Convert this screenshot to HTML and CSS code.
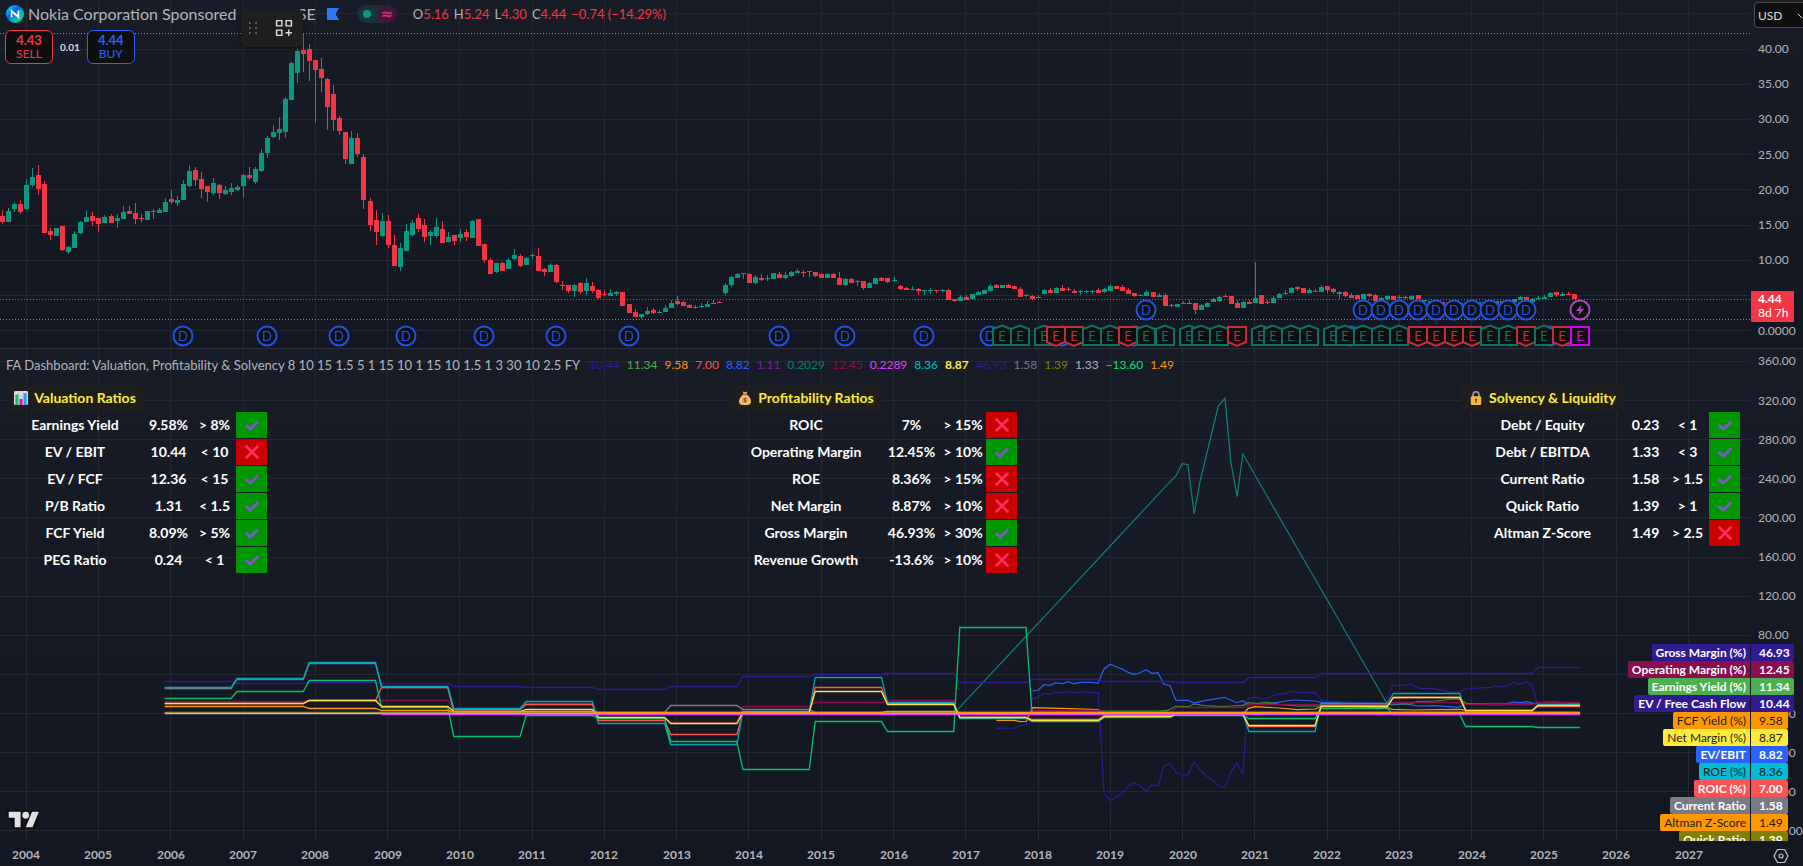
FILE: index.html
```html
<!DOCTYPE html>
<html lang="en">
<head>
<meta charset="utf-8">
<title>Nokia Corporation Sponsored – chart</title>
<link rel="stylesheet" href="styles.css">
</head>
<body>
<svg class="symbols" aria-hidden="true">
  <symbol id="pass" viewBox="0 0 14 14"><path d="M1.6 7.8 5.2 11.2 12.4 4" fill="none" stroke="#7e57c2" stroke-width="3" stroke-linecap="round" stroke-linejoin="round"/></symbol>
  <symbol id="fail" viewBox="0 0 14 14"><path d="M1.5 1.5 12.5 12.5M12.5 1.5 1.5 12.5" fill="none" stroke="#ff2e5f" stroke-width="2.5" stroke-linecap="round"/></symbol>
</svg>

<main class="chart">
  <section class="pane pane-price">
    <svg class="plot" id="price-plot" role="img" aria-label="Monthly candles"></svg>
    <div class="overlay">
      <header class="symbol-row">
        <svg class="logo" viewBox="0 0 18 18" aria-hidden="true">
          <defs><linearGradient id="nk" x1="0.1" y1="0.1" x2="0.9" y2="0.9"><stop offset="0" stop-color="#00e0e8"/><stop offset="0.4" stop-color="#0a5cf0"/><stop offset="0.6" stop-color="#00a8c8"/><stop offset="1" stop-color="#0be070"/></linearGradient></defs>
          <circle cx="9" cy="9" r="9" fill="url(#nk)"/>
          <path d="M5.6 12.6V6L12.4 12V5.4" fill="none" stroke="#fff" stroke-width="1.7"/>
        </svg>
        <h1 class="title">Nokia Corporation Sponsored · M · NYSE</h1>
        <svg class="flag" viewBox="0 0 12 12" aria-hidden="true"><path d="M1 0H12L8.500 6 12 12H0V1A1 1 0 0 1 1 0Z" fill="#2979ff"/></svg>
        <span class="pill"><i class="pill-open"></i><i class="pill-data">≈</i></span>
        <p class="ohlc"><span>O<b>5.16</b></span><span>H<b>5.24</b></span><span>L<b>4.30</b></span><span>C<b>4.44</b></span><b>−0.74 (−14.29%)</b></p>
      </header>
      <div class="trade-row">
        <button class="trade sell" type="button"><strong>4.43</strong>SELL</button>
        <span class="spread">0.01</span>
        <button class="trade buy" type="button"><strong>4.44</strong>BUY</button>
      </div>
      <div class="floating-bar">
        <svg class="grip" viewBox="0 0 8 12" aria-hidden="true"><path d="M0 0h2v2H0zM6 0h2v2H6zM0 5h2v2H0zM6 5h2v2H6zM0 10h2v2H0zM6 10h2v2H6z" fill="#5a5a5a"/></svg>
        <button class="add-layout" type="button" aria-label="Add to favorites"><svg viewBox="0 0 17 17" aria-hidden="true"><path d="M1.500 1.500h5v5h-5zM10.500 1.500h5v5h-5zM1.500 10.500h5v5h-5zM13 10v6M10 13h6" fill="none" stroke="#e0e0e0" stroke-width="1.300"/></svg></button>
      </div>
    </div>
  </section>
  <aside class="axis axis-price">
    <svg class="plot" id="price-axis"></svg>
    <select class="currency" aria-label="Currency"><option>USD</option></select>
    <p class="last-price"><span>4.44</span><span>8d 7h</span></p>
  </aside>

  <section class="pane pane-ratios">
    <svg class="plot" id="ratio-plot" role="img" aria-label="Fundamental ratios"></svg>
    <div class="overlay">
      <p class="legend"><span class="legend-name">FA Dashboard: Valuation, Profitability &amp; Solvency 8 10 15 1.5 5 1 15 10 1 15 10 1.5 1 3 30 10 2.5 FY</span>
        <span class="c-indigo">10.44</span><span class="c-green">11.34</span><span class="c-orange">9.58</span><span class="c-red">7.00</span><span class="c-blue">8.82</span><span class="c-purple">1.11</span><span class="c-teal">0.2029</span><span class="c-maroon">12.45</span><span class="c-pink">0.2289</span><span class="c-cyan">8.36</span><span class="c-yellow">8.87</span><span class="c-indigo">46.93</span><span class="c-gray">1.58</span><span class="c-olive">1.39</span><span class="c-silver">1.33</span><span class="c-lime">−13.60</span><span class="c-orange">1.49</span></p>
      <div class="tables">
        <table class="ratios valuation">
          <tr><th class="head"><svg class="emoji" viewBox="0 0 16 16" aria-hidden="true"><rect width="16" height="16" rx="1.500" fill="#e3dcea"/><path d="M5.500 0v16M10.500 0v16M0 5.500h16M0 10.500h16" stroke="#c3b5d2" stroke-width="0.800"/><path d="M1.500 4h3.500v12H1.500z" fill="#14c060"/><path d="M6.300 9h3.500v7H6.300z" fill="#f0147c"/><path d="M11 2.500h3.500V16H11z" fill="#1aa3f0"/></svg>Valuation Ratios</th><td colspan="3"></td></tr>
          <tr><th>Earnings Yield</th><td>9.58%</td><td>&gt; 8%</td><td class="ok"><svg><use href="#pass"/></svg></td></tr>
          <tr><th>EV / EBIT</th><td>10.44</td><td>&lt; 10</td><td class="bad"><svg><use href="#fail"/></svg></td></tr>
          <tr><th>EV / FCF</th><td>12.36</td><td>&lt; 15</td><td class="ok"><svg><use href="#pass"/></svg></td></tr>
          <tr><th>P/B Ratio</th><td>1.31</td><td>&lt; 1.5</td><td class="ok"><svg><use href="#pass"/></svg></td></tr>
          <tr><th>FCF Yield</th><td>8.09%</td><td>&gt; 5%</td><td class="ok"><svg><use href="#pass"/></svg></td></tr>
          <tr><th>PEG Ratio</th><td>0.24</td><td>&lt; 1</td><td class="ok"><svg><use href="#pass"/></svg></td></tr>
        </table>
        <table class="ratios profitability">
          <tr><th class="head"><svg class="emoji" viewBox="0 0 16 16" aria-hidden="true"><path d="M5.500 0.500 8 1.500 10.500 0.500 9.800 4H6.200Z" fill="#e8b06a"/><path d="M6 4h4c3 2 4.800 5 4.800 8 0 2.600-1.500 4-4 4H5.200c-2.500 0-4-1.400-4-4C1.200 9 3 6 6 4Z" fill="#f6bd73"/><path d="M5.300 4h5.400" stroke="#a05a3a" stroke-width="1.300"/><circle cx="8" cy="10.500" r="3.300" fill="#dd9a56"/><path d="M9.500 9C8.500 8.300 6.700 8.600 6.800 9.700 7 10.800 9.300 10.200 9.300 11.400 9.200 12.400 7.300 12.500 6.500 11.800M8 7.800v5.400" fill="none" stroke="#8a4a34" stroke-width="0.900"/></svg>Profitability Ratios</th><td colspan="3"></td></tr>
          <tr><th>ROIC</th><td>7%</td><td>&gt; 15%</td><td class="bad"><svg><use href="#fail"/></svg></td></tr>
          <tr><th>Operating Margin</th><td>12.45%</td><td>&gt; 10%</td><td class="ok"><svg><use href="#pass"/></svg></td></tr>
          <tr><th>ROE</th><td>8.36%</td><td>&gt; 15%</td><td class="bad"><svg><use href="#fail"/></svg></td></tr>
          <tr><th>Net Margin</th><td>8.87%</td><td>&gt; 10%</td><td class="bad"><svg><use href="#fail"/></svg></td></tr>
          <tr><th>Gross Margin</th><td>46.93%</td><td>&gt; 30%</td><td class="ok"><svg><use href="#pass"/></svg></td></tr>
          <tr><th>Revenue Growth</th><td>-13.6%</td><td>&gt; 10%</td><td class="bad"><svg><use href="#fail"/></svg></td></tr>
        </table>
        <table class="ratios solvency">
          <tr><th class="head"><svg class="emoji" viewBox="0 0 16 16" aria-hidden="true"><path d="M4.700 7V4.200a3.300 3.300 0 0 1 6.600 0V7" fill="none" stroke="#a9a3b8" stroke-width="1.800"/><rect x="2" y="6" width="12" height="10" rx="1.500" fill="#fbb73c"/><path d="M8 8.500a1.300 1.300 0 0 1 .7 2.400V13.500H7.300V10.900A1.300 1.300 0 0 1 8 8.500Z" fill="#4a3448"/></svg>Solvency &amp; Liquidity</th><td colspan="3"></td></tr>
          <tr><th>Debt / Equity</th><td>0.23</td><td>&lt; 1</td><td class="ok"><svg><use href="#pass"/></svg></td></tr>
          <tr><th>Debt / EBITDA</th><td>1.33</td><td>&lt; 3</td><td class="ok"><svg><use href="#pass"/></svg></td></tr>
          <tr><th>Current Ratio</th><td>1.58</td><td>&gt; 1.5</td><td class="ok"><svg><use href="#pass"/></svg></td></tr>
          <tr><th>Quick Ratio</th><td>1.39</td><td>&gt; 1</td><td class="ok"><svg><use href="#pass"/></svg></td></tr>
          <tr><th>Altman Z-Score</th><td>1.49</td><td>&gt; 2.5</td><td class="bad"><svg><use href="#fail"/></svg></td></tr>
        </table>
      </div>
      <a class="tv-logo" href="#" aria-label="TradingView"><svg viewBox="-2 2 40 22"><g stroke="#0c0c0c" stroke-width="4" stroke-linejoin="round"><path d="M14 22H7V11H0V4h14v18zM28 22h-8l7.500-18h8L28 22z"/><circle cx="20" cy="8" r="4"/></g><g fill="#e0e0e0"><path d="M14 22H7V11H0V4h14v18zM28 22h-8l7.500-18h8L28 22z"/><circle cx="20" cy="8" r="4"/></g></svg></a>
    </div>
  </section>
  <aside class="axis axis-ratios">
    <svg class="plot" id="ratio-axis"></svg>
  </aside>
  <ul class="tags">
    <li class="t-indigo wide"><span>Gross Margin (%)</span><span>46.93</span></li>
    <li class="t-maroon wide"><span>Operating Margin (%)</span><span>12.45</span></li>
    <li class="t-green wide"><span>Earnings Yield (%)</span><span>11.34</span></li>
    <li class="t-indigo wide"><span>EV / Free Cash Flow</span><span>10.44</span></li>
    <li class="t-orange dark"><span>FCF Yield (%)</span><span>9.58</span></li>
    <li class="t-yellow dark"><span>Net Margin (%)</span><span>8.87</span></li>
    <li class="t-blue"><span>EV/EBIT</span><span>8.82</span></li>
    <li class="t-cyan dark"><span>ROE (%)</span><span>8.36</span></li>
    <li class="t-red"><span>ROIC (%)</span><span>7.00</span></li>
    <li class="t-gray"><span>Current Ratio</span><span>1.58</span></li>
    <li class="t-orange dark"><span>Altman Z-Score</span><span>1.49</span></li>
    <li class="t-olive"><span>Quick Ratio</span><span>1.39</span></li>
  </ul>

  <div class="time-axis"><svg class="plot" id="time-axis"></svg></div>
  <button class="axis-settings" type="button" aria-label="Axis settings"><svg viewBox="0 0 16 16" aria-hidden="true"><path d="M4.500 1.500h7L15 8l-3.500 6.500h-7L1 8Z" fill="none" stroke="#c8c8c8" stroke-width="1.200" stroke-linejoin="round"/><circle cx="8" cy="8" r="2" fill="none" stroke="#c8c8c8" stroke-width="1.200"/></svg></button>
</main>
<script src="chart.js"></script>
</body>
</html>
```
FILE: styles.css
```css
* { box-sizing: border-box; }
body {
  margin: 0;
  background: #131722;
  color: #b2b5be;
  font-family: Lato, "Open Sans", sans-serif;
  font-size: 13px;
  overflow: hidden;
}
.symbols { display: none; }
button, select { font-family: inherit; cursor: pointer; }
p, h1, ul { margin: 0; padding: 0; }

.chart {
  display: grid;
  grid-template-columns: minmax(0, 1fr) 53px;
  grid-template-rows: minmax(0, 349fr) minmax(0, 492fr) 25px;
  height: 100vh;
}
.pane, .axis {
  display: grid;
  grid-template: minmax(0, 1fr) / minmax(0, 1fr);
  overflow: hidden;
  background: linear-gradient(#181c27, #131722);
}
.pane-price { grid-area: 1 / 1; }
.axis-price { grid-area: 1 / 2; }
.pane-ratios { grid-area: 2 / 1; }
.axis-ratios { grid-area: 2 / 2; }
.pane-price, .axis-price { border-bottom: 1px solid #2c303b; }
.pane > *, .axis > .plot { grid-area: 1 / 1; }
.plot { display: block; width: 100%; height: 100%; overflow: hidden; }
.plot text { font-size: 12px; fill: #b2b5be; }
.plot .year { font-weight: 700; font-size: 12px; text-anchor: middle; }
.plot .mark { font-size: 13px; text-anchor: middle; }
.overlay { position: relative; display: flex; flex-direction: column; }

.symbol-row { display: flex; align-items: center; height: 28px; padding-left: 6px; }
.logo { width: 18px; height: 18px; margin-right: 4px; }
.title { font-size: 16px; font-weight: 400; line-height: 20px; white-space: nowrap; }
.flag { width: 12px; height: 12px; margin-left: 11px; }
.pill { display: flex; width: 40px; height: 18px; margin: 0 16px 0 18px; border-radius: 9px; overflow: hidden; }
.pill i { display: flex; flex: 1; align-items: center; justify-content: center; font-style: normal; }
.pill-open { background: #17333b; }
.pill-open::before { content: ""; width: 8px; height: 8px; border-radius: 50%; background: #089981; }
.pill-data { background: #3a1a35; color: #e91e78; font: 700 15px "DejaVu Sans", sans-serif; }
.ohlc { display: flex; gap: 5px; font-size: 13px; white-space: nowrap; }
.ohlc b { color: #f23645; font-weight: 400; }

.trade-row { display: flex; align-items: center; gap: 7px; margin-top: 2px; padding-left: 5px; }
.trade {
  width: 48px; height: 34px; padding: 0;
  border: 1px solid; border-radius: 6px;
  background: #0f0f0f; font-size: 12px; line-height: 14px;
}
.trade strong { display: block; font-size: 13px; }
.sell { color: #f23645; }
.buy { color: #2962ff; }
.spread { color: #dbdbdb; font-size: 10px; font-weight: 700; }

.floating-bar {
  position: absolute; left: 241px; top: 9px;
  display: flex; align-items: center; gap: 18px;
  width: 62px; height: 38px; padding-left: 8px;
  border-radius: 6px; background: #1f1f1f;
  box-shadow: 0 2px 4px rgba(0, 0, 0, 0.4);
}
.grip { width: 8px; height: 12px; }
.add-layout { width: 18px; height: 18px; padding: 0; border: 0; background: none; }
.add-layout svg { display: block; width: 18px; height: 18px; }

.axis-price { position: relative; }
.currency {
  position: absolute; left: 4px; top: 2px;
  width: 49px; height: 26px; padding: 0 3px;
  border: 1px solid #4a4a4a; border-right: 0; border-radius: 4px 0 0 4px;
  appearance: none; color: #dbdbdb; font-size: 12px;
  background: #0f0f0f linear-gradient(45deg, transparent 45%, #dbdbdb 45% 60%, transparent 60%) 43px 11px / 4px 4px no-repeat;
}
.last-price {
  position: absolute; left: 1px; top: 83.500%;
  display: flex; flex-direction: column; justify-content: center;
  width: 43px; height: 31px; padding-left: 7px;
  background: #f23645; color: #fff; font-size: 12px; line-height: 14px;
}
.last-price span:first-child { font-weight: 700; }

.legend { display: flex; gap: 7px; padding: 8px 6px 0; font-size: 12px; line-height: 16px; white-space: nowrap; }
.legend-name { margin-right: 2px; font-size: 13px; }
.c-indigo { color: #311b92; }
.c-green { color: #4caf50; }
.c-orange { color: #ff9800; }
.c-red { color: #ff5252; }
.c-blue { color: #2962ff; }
.c-purple { color: #7b1fa2; }
.c-teal { color: #08806f; }
.c-maroon { color: #880e4f; }
.c-pink { color: #e040fb; }
.c-cyan { color: #00bcd4; }
.c-yellow { color: #ffeb3b; font-weight: 700; }
.c-gray { color: #787b86; }
.c-olive { color: #808000; }
.c-silver { color: #b2b5be; }
.c-lime { color: #00e676; }

.tables {
  display: grid;
  grid-template-columns: 1fr auto 1fr;
  align-items: start;
  padding: 11px 9px 0 6px;
}
.ratios { border-spacing: 1px; color: #fff; font-size: 14px; font-weight: 700; }
.valuation { justify-self: start; }
.solvency { justify-self: end; }
.ratios th, .ratios td { height: 26px; padding: 0; text-align: center; line-height: 18px; white-space: nowrap; }
.ratios .head { color: #ffeb3b; background: #1e1e1e; }
.ratios td svg { display: block; width: 14px; height: 14px; margin: 0 auto; }
.ratios td:last-child:not([colspan]) { width: 31px; }
.ratios .ok { background: #009600; }
.ratios .bad { background: #c80000; }
.emoji { width: 14px; height: 14px; margin-right: 6px; vertical-align: -2px; }
.valuation th { width: 136px; }
.valuation td:nth-child(2) { width: 49px; }
.valuation td:nth-child(3) { width: 41px; }
.profitability th { width: 152px; }
.profitability td:nth-child(2) { width: 57px; }
.profitability td:nth-child(3) { width: 44px; }
.solvency th { width: 163px; }
.solvency td:nth-child(2) { width: 41px; }
.solvency td:nth-child(3) { width: 41px; }

.tv-logo { width: 34px; margin: auto 0 12px 7px; }
.tv-logo svg { display: block; width: 34px; height: 19px; }

.tags {
  grid-column: 1 / 3; grid-row: 2; align-self: end;
  justify-self: end;
  height: 197px; overflow: hidden; list-style: none;
  z-index: 1;
}
.tags li { display: grid; grid-template-columns: 1fr 53px; gap: 0; height: 17px; font-size: 12px; line-height: 17px; color: #fff; font-weight: 700; }
.tags span { padding: 0 4px; background: var(--tag); white-space: nowrap; }
.tags span:first-child { justify-self: end; border-radius: 2px 0 0 2px; }
.tags span:last-child { width: 37px; margin-left: 1px; padding: 0 0 0 8px; border-radius: 0 2px 2px 0; }
.tags .wide span:last-child { width: 43px; }
.tags .dark { color: #1c1c14; font-weight: 400; }
.t-indigo { --tag: #311b92; }
.t-maroon { --tag: #880e4f; }
.t-green { --tag: #4caf50; }
.t-orange { --tag: #ff9800; }
.t-yellow { --tag: #ffeb3b; }
.t-blue { --tag: #2962ff; }
.t-cyan { --tag: #00bcd4; }
.t-red { --tag: #ff5252; }
.t-gray { --tag: #787b86; }
.t-olive { --tag: #808000; }

.time-axis { grid-column: 1; grid-row: 3; overflow: hidden; }
.axis-settings { grid-column: 2; grid-row: 3; display: flex; align-items: center; padding: 4px 0 0 23px; border: 0; background: none; }
.axis-settings svg { width: 16px; height: 16px; }
```
FILE: chart.js
```js
const UP = '#089981', DOWN = '#f23645';
const GRID = '#242833';

/* Candles by month: direction, body top, body bottom, wick top, wick bottom.
   Levels are thirds of a unit below the chunk's base. */
const chunks = [
  { month: -4, base: 0, rows: `
r648,666,630,672 g633,666,624,666 g612,627,606,636 r612,636,600,642 g555,627,537,630 g531,555,504,561 r525,567,495,585 r552,699,543,699
r693,705,684,720 g684,708,684,708 r678,750,678,753 g741,756,738,762 g702,744,693,744 g666,699,663,702 g651,666,633,666 r649,663,636,678
r654,672,654,696 g651,669,645,669 r648,669,642,669 g654,663,642,684 g636,657,618,657 r633,642,618,642 r639,657,609,672 r654,657,642,666
g633,660,633,660 r633,636,627,657 g630,639,624,639 g606,636,594,636 r597,606,570,612 g600,609,588,618 g552,600,540,600 g513,558,495,561
r510,540,501,558 r537,567,516,594 r558,576,558,606 g549,579,534,585 r555,579,552,597 g570,582,558,585 g564,576,549,585 g561,570,555,573
g525,558,522,594 r525,534,501,540 g507,546,501,552 g459,513,447,516 g414,459,408,474 g396,411,375,414 g387,399,351,420 g297,396,291,414
g189,300,186,300 g153,219,147,249 r150,162,100,216 r147,183,132,243 r180,210,180,369 r207,234,174,276 r237,321,234,390 r282,360,255,393
r354,393,348,405 r396,477,396,492 g414,492,393,492 r414,462,399,471 r471,600,462,627 r603,675,594,693 r660,696,630,735 g663,708,639,711
r663,735,645,744 r735,798,705,798 g744,801,729,813 g693,753,672,753 g669,705,660,708 r654,687,642,696 r675,711,657,726 g696,708,690,735
g681,708,654,714 r687,729,663,729 g711,726,696,726 r705,723,705,735 g702,714,687,726 r696,711,687,723 g663,714,660,714 r657,738,657,738
r732,780,732,789 r780,822,774,822 g789,816,789,819 r789,813,786,813 g780,807,774,807 g765,777,747,780 r768,798,762,801 g774,795,771,795
g765,768,759,777 r768,813,744,813 r807,816,804,828 g795,816,792,816 r795,846,792,849 r855,858,843,870 r855,873,855,879 g855,873,852,891
r849,876,846,882 g849,873,834,885 r858,873,846,879 r870,894,867,897 r882,885,870,888 g879,888,867,888 g876,882,873,888 r876,918,876,918
r912,939,912,939 r936,951,927,951 g942,951,942,957 g933,942,921,945 r930,939,924,942 g936,939,930,939 g924,936,915,936 g909,924,900,924
r903,912,888,915 r906,918,903,918 r915,924,912,924 g921,924,915,927` },
  { month: 112, base: 600, rows: `
g318,321,309,324 g312,321,303,321 r309,312,300,312 r306,309,303,309 g255,279,249,285 g231,255,228,261 g222,234,219,234 g219,222,219,237
r222,249,219,249 g231,249,225,252 r234,240,222,243 g234,237,225,243 g219,237,219,237 r222,234,216,234 g225,234,216,237 g216,228,213,231
g213,219,207,219 r215,218,210,231 r213,216,213,231 r216,228,216,231 r222,234,219,234 g222,234,219,234 r222,234,219,234 r234,255,216,255
g237,255,234,258 r237,249,234,249 g242,245,240,258 r243,264,243,270 g249,264,246,264 g234,252,234,252 r234,243,231,243 r234,246,234,249
g240,243,231,246 r258,267,255,270 r264,270,261,270 g267,270,258,270 r267,273,264,285 g270,273,270,285 g270,273,264,282 r270,273,270,279
g270,273,267,276 r270,300,267,300 r297,303,297,306 g291,303,285,303 r291,300,285,300 g282,297,282,300 g276,285,273,285 g270,282,270,282
g258,273,252,273 r255,264,252,264 g255,264,255,264 r255,264,252,264 r258,267,258,267 r267,291,261,291 g285,288,282,291 r288,297,285,300
g291,294,285,294 g270,282,267,282 r270,279,264,279 g264,279,261,279 r264,273,255,273 r267,270,261,273 r273,279,267,279 g273,276,270,285
g273,276,270,279 g273,276,270,282 r270,279,264,279 g267,276,264,279 g258,273,252,273 r258,267,258,267 r261,273,255,273 r270,282,264,282
r279,288,279,291 g285,288,282,288 g276,288,270,288 r276,291,276,291 g285,291,279,291 r285,318,279,318 r315,318,312,321 g312,321,312,321
g309,312,303,312 r309,312,300,312 r309,330,309,342 g315,330,312,330 g309,321,306,321 g297,306,294,306 g291,303,288,306 r288,291,282,291
r288,312,288,312 r309,324,300,324 g306,324,303,324 r306,312,300,312 g294,309,186,309 r285,312,285,312 r306,309,300,312 g294,309,288,309
g282,294,279,294 g279,282,270,285 g264,279,261,279` },
  { month: 211, base: 720, rows: `
r141,147,138,153 r144,159,144,159 g150,159,144,159 g153,156,147,156 g141,156,135,156 r138,150,138,159 r147,156,144,162 g156,162,153,177
r156,168,153,171 r165,174,159,174 r165,177,165,177 g162,177,162,177 r162,168,159,171 r165,183,162,183 g174,180,171,180 g168,177,165,180
r168,180,168,180 g171,174,165,177 r171,174,168,177 g168,177,165,180 r165,177,165,177 g180,184,180,186 g183,189,183,190 r186,196,186,196
r186,198,186,198 g190,200,190,200 r190,200,190,200 g190,198,190,198 r188,198,188,198 g186,196,186,196 g186,196,186,196 g186,195,186,195
r184,192,184,192 g184,192,184,192 r182,190,182,190 g182,190,180,190 g177,186,177,188 g171,180,168,180 r171,183,171,186 g177,186,174,186
g174,177,168,180 g171,177,165,177 g159,171,156,171 r156,165,156,171 g162,168,156,168 r162,165,156,165 r162,177,162,177` },
];

const dividendsLow = [26, 40, 52, 63, 76, 88, 100, 125, 136, 149, 160, 172, 184, 220, 253, 256];
const dividendsHigh = [186, 222, 225, 228, 231, 234, 237, 240, 243, 246, 249];
const earnings = 'g162 g165 g169 r171 r174 g177 g180 r183 g186 g189 g193 g195 g198 r201 g205 g207 g210 g213 g217 g219 g222 g225 g228 r231 r234 r237 r240 g243 g246 r249 g252 r255 m258';

/* Fiscal-year levels, one per year from FY2006, as heights on the ratio pane. */
const yearly = [
  ['#311b92', [681, 683, 682, 683, 686, 687, 689, 686, 676, 674, 673, 682, 679, 681, 682, 677, 673, 673, 673, 667]],
  ['#880e4f', [701, 701, 700, 700, 709, 703, 717, 722, 706, 702, 700, 717, 710, 712, 707, 704, 704, 702, 704, 702]],
  ['#787b86', [688, 679, 663, 687, 712, 712, 712, 705, 709, 712, 712, 713, 713, 713, 713, 713, 712, 712, 712, 712]],
  ['#ff5252', [703, 703, 700, 687, 709, 704, 720, 734, 712, 687, 703, 717, 719, 715, 713, 726, 705, 697, 710, 706]],
  ['#00a5bb', [687, 678, 662, 686, 708, 701, 723, 744, 711, 677, 702, 718, 721, 717, 713, 731, 703, 693, 711, 704]],
  ['#00c46a', [698, 691, 680, 707, 736, 715, 718, 741, 769, 721, 731, 627, 713, 713, 715, 718, 708, 714, 726, 727]],
  ['#808000', [712, 712, 712, 712, 712, 712, 712, 712, 712, 712, 712, 712, 712, 712, 712, 712, 712, 712, 712, 712]],
  ['#ffe13b', [703, 703, 700, 706, 711, 709, 717, 723, 712, 691, 704, 717, 720, 716, 714, 725, 706, 697, 710, 705]],
  ['#d0a8e0', [713, 713, 713, 713, 713, 713, 713, 713, 713, 713, 713, 713, 713, 713, 713, 713, 713, 713, 713, 713]],
  ['#e040fb', [null, null, null, 714, 714, 714, 714, 714, 714, 714, 714, 714, 714, 714, 714, 714, 714, 714, 714, 714]],
  ['#ff9800', [706, 706, 708, 710, 711, 711, 712, 712, 712, 712, 711, 712, 712, 712, 712, 712, 712, 712, 712, 712]],
];

/* Monthly curves; x,y pairs on a 2.24 : 3 lattice anchored at (900, 380). */
const curves = [
  ['#2962ff', '297,933 310,930 322,914 336,916 349,908 363,911 376,905 390,911 404,907 430,907 444,909 457,867 471,853 484,860 497,867 510,877 524,883 537,879 551,869 564,880 578,878 591,912 605,917 618,961 645,961 659,969 672,965 686,961 700,958 727,952 740,960 754,968 768,962 780,975 830,970 880,960 930,963 945,968 1090,972 1103,975 1130,971 1160,978 1200,977 1250,982 1268,972 1360,971 1375,966 1390,968 1404,965 1418,970 1522,970'],
  ['#311b92', '216,1045 256,1044 270,1037 283,1036 297,955 310,952 322,940 336,943 349,937 363,939 376,935 390,939 404,935 417,937 444,938 457,1240 471,1262 497,1240 510,1220 524,1208 537,1216 551,1234 564,1214 578,1219 591,1158 605,1151 618,1177 632,1185 645,1184 659,1146 672,1170 686,1188 700,1199 713,1217 727,1223 740,1178 754,1149 768,1181 780,957 795,951 808,957 822,955 835,947 848,943 862,941 876,934 890,936 903,938 930,937 945,962 1000,966 1090,970 1103,916 1130,916 1144,911 1157,922 1170,926 1190,925 1217,932 1240,937 1255,934 1268,927 1308,923 1322,923 1335,918 1348,921 1362,917 1375,907 1388,913 1402,905 1415,915 1428,970 1522,972'],
  ['#388e3c', '297,993 580,993 600,991 618,979 645,980 659,972 680,977 720,980 740,978 768,976 780,968 800,971 820,966 850,973 890,978 935,978 1060,972 1144,972 1157,965 1200,963 1240,957 1255,958 1268,970 1330,974 1418,972 1430,968 1460,966 1522,970'],
  ['#ff9800', '216,1021 256,1021 270,1025 283,1024 297,983 380,986 444,989 455,1005 480,1003 605,1008 618,1001 768,1003 780,985 795,980 850,984 890,989 930,987 945,978 1090,982 1103,988 1150,990 1205,989 1255,988 1268,991'],
  ['#0a8574', '127,992 605,305 618,288 632,251 645,254 659,402 672,305 713,78 728,55 741,245 755,350 768,222 795,285 825,355 958,662 1090,968'],
];

const monthX = n => 26.2 + 6.023 * n;

function line(x1, y1, x2, y2, color, extra = '') {
  return `<line x1="${x1}" y1="${y1}" x2="${x2}" y2="${y2}" stroke="${color}" ${extra}/>`;
}
const snap = v => Math.floor(v) + 0.5;

function verticals(kx, height) {
  let out = '';
  for (let y = 0; y < 24; y++) {
    const x = snap(monthX(y * 12) * kx);
    out += line(x, 0, x, height, GRID);
  }
  return out;
}

function badge(kind, x, y) {
  const looks = {
    d: ['<circle r="9.500"', '#1e53e5', 'D'],
    g: ['<path d="M-9 -7 0 -10.500 9 -7V9H-9Z"', '#087463', 'E'],
    r: ['<path d="M-9 -9H9V6L0 10 -9 6Z"', '#c62d3a', 'E'],
    m: ['<path d="M-9 -9H9V9H-9Z"', '#d500f9', 'E'],
    z: ['<circle r="9.500"', '#ab47bc', ''],
  };
  const [shape, color, letter] = looks[kind];
  const inner = kind === 'z'
    ? `<path d="M1.500 -5.500 -4 1H-0.500L-1.500 5.500 4 -1H0.500Z" fill="${color}"/>`
    : `<text class="mark" y="5" style="fill:${color}">${letter}</text>`;
  return `<g transform="translate(${Math.round(x)} ${Math.round(y)})">${shape} fill="#0f0f0f" stroke="${color}" stroke-width="2"/>${inner}</g>`;
}

function drawPrice() {
  const el = document.getElementById('price-plot');
  const w = el.clientWidth, h = el.clientHeight, kx = w / 1750, ky = h / 348;
  let out = verticals(kx, h);
  for (let p = 0; p <= 45; p += 5) {
    const y = snap((330.6 - 7.04 * p) * ky);
    out += line(0, y, w, y, GRID);
  }
  for (const chunk of chunks) {
    chunk.rows.trim().split(/\s+/).forEach((row, i) => {
      const color = row[0] === 'g' ? UP : DOWN;
      const [top, bottom, high, low] = row.slice(1).split(',').map(v => (+v + chunk.base) / 3 * ky);
      const x = Math.round(monthX(chunk.month + i) * kx);
      out += `<rect x="${x - 2}" y="${Math.round(top)}" width="5" height="${Math.max(1, Math.round(bottom - top))}" fill="${color}"/>`;
      out += `<rect x="${x}" y="${Math.round(high)}" width="1" height="${Math.round(low - high)}" fill="${color}"/>`;
    });
  }
  out += line(0, snap(33 * ky), w, snap(33 * ky), '#8b8e97', 'stroke-dasharray="1 2"');
  out += line(0, snap(319 * ky), w, snap(319 * ky), '#8b8e97', 'stroke-dasharray="1 2"');
  out += line(0, snap(299 * ky), w, snap(299 * ky), DOWN, 'stroke-dasharray="1 2"');
  dividendsLow.forEach(n => { out += badge('d', monthX(n) * kx, 336 * ky); });
  dividendsHigh.forEach(n => { out += badge('d', monthX(n) * kx, 310 * ky); });
  out += badge('z', monthX(258) * kx, 310 * ky);
  earnings.split(' ').forEach(e => { out += badge(e[0], monthX(+e.slice(1)) * kx, 336 * ky); });
  el.innerHTML = out;

  let labels = '';
  for (let p = 0; p <= 40; p += 5) {
    if (p === 5) continue;
    labels += `<text x="8" y="${Math.round((330.6 - 7.04 * p) * ky) + 4}">${p ? p.toFixed(2) : '0.0000'}</text>`;
  }
  document.getElementById('price-axis').innerHTML = labels;
}

function drawRatios() {
  const el = document.getElementById('ratio-plot');
  const w = el.clientWidth, h = el.clientHeight, kx = w / 1750, ky = h / 492;
  const top = 349;
  let out = verticals(kx, h), labels = '';
  for (let v = -120; v <= 360; v += 40) {
    const y = (713.5 - 0.978 * v - top) * ky;
    out += line(0, snap(y), w, snap(y), GRID);
    if (v === 40) continue;
    const text = v === 0 ? '0.0000' : v.toFixed(2).replace('-', '−');
    labels += `<text x="8" y="${Math.round(y) + 4}">${text}</text>`;
  }
  for (const [color, points] of curves) {
    const d = points.split(' ').map(p => {
      const [x, y] = p.split(',').map(Number);
      return `${((900 + x / 2.24) * kx).toFixed(1)},${((380 + y / 3 - top) * ky).toFixed(1)}`;
    }).join(' ');
    out += `<polyline points="${d}" fill="none" stroke="${color}" stroke-width="1.200"/>`;
  }
  for (const [color, levels] of yearly) {
    const pts = [];
    levels.forEach((level, i) => {
      if (level === null) return;
      const start = 23 + 12 * i, end = i === 19 ? 258 : start + 11;
      const y = ((level + 0.5 - top) * ky).toFixed(1);
      pts.push(`${(monthX(start) * kx).toFixed(1)},${y}`, `${(monthX(end) * kx).toFixed(1)},${y}`);
    });
    out += `<polyline points="${pts.join(' ')}" fill="none" stroke="${color}" stroke-width="1.300"/>`;
  }
  el.innerHTML = out;
  document.getElementById('ratio-axis').innerHTML = labels;
}

function drawTime() {
  const el = document.getElementById('time-axis');
  const kx = el.clientWidth / 1750;
  let out = '';
  for (let y = 0; y < 24; y++) {
    out += `<text class="year" x="${Math.round(monthX(y * 12) * kx)}" y="18">${2004 + y}</text>`;
  }
  el.innerHTML = out;
}

function draw() { drawPrice(); drawRatios(); drawTime(); }
draw();
addEventListener('resize', draw);
```
